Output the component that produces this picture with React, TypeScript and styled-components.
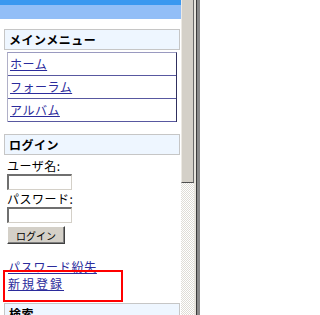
import React from 'react';
import styled, { createGlobalStyle } from 'styled-components';

const GlobalStyle = createGlobalStyle`
  html, body {
    margin: 0;
    padding: 0;
    background: #ffffff;
    overflow: clip;
  }
  body {
    font-family: 'Noto Sans CJK JP', 'DejaVu Sans', sans-serif;
    font-size: 12px;
    color: #000000;
  }
`;

const Page = styled.div`
  display: flex;
  width: 200px;
  height: 315px;
  overflow: clip;
`;

const Content = styled.div`
  position: relative;
  width: 181px;
  height: 315px;
  flex: none;
  display: flex;
  flex-direction: column;
  overflow: clip;
`;

const TopBar = styled.div`
  height: 5px;
  flex: none;
  background: #3a98f0;
`;

const SubBar = styled.div`
  height: 14px;
  flex: none;
  background: #92bef7;
`;

const Sidebar = styled.div`
  display: flex;
  flex-direction: column;
  flex: none;
  padding: 10px 1px 0 4px;
`;

const BlockTitle = styled.div<{ $gap?: number }>`
  height: 19px;
  line-height: 19px;
  flex: none;
  margin-top: ${(p) => p.$gap ?? 0}px;
  padding-left: 4px;
  border: 1px solid #c6c6c6;
  background: #eef6ff;
  font-weight: bold;
  letter-spacing: 0.5px;
`;

const Menu = styled.ul`
  list-style: none;
  margin: 2px 3px 0 3px;
  padding: 0;
  border-top: 1px solid #9a9ac0;
  border-left: 1px solid #b0b0c8;
  border-right: 1px solid #30305e;
`;

const MenuItem = styled.li`
  height: 22px;
  line-height: 22px;
  padding-left: 2px;
  border-bottom: 1px solid #5858a0;
`;

const Link = styled.a<{ $spacing?: number }>`
  color: #2b2b9c;
  text-decoration: underline;
  letter-spacing: ${(p) => p.$spacing ?? 0.5}px;
  cursor: pointer;
`;

const LoginForm = styled.div`
  display: flex;
  flex-direction: column;
  align-items: flex-start;
  padding: 2px 0 0 3px;
`;

const Label = styled.div`
  line-height: 17px;
  letter-spacing: 0.5px;
`;

const TextBox = styled.input`
  box-sizing: border-box;
  width: 65px;
  height: 16px;
  margin: 0;
  padding: 0 2px;
  border-style: solid;
  border-width: 2px 1px 1px 2px;
  border-color: #6f6f6f #d4d0c8 #d4d0c8 #6f6f6f;
  background: #ffffff;
  font-size: 11px;
`;

const Button = styled.button`
  box-sizing: border-box;
  width: 58px;
  height: 18px;
  margin: 3px 0 0 0;
  padding: 0;
  border-style: solid;
  border-width: 1px;
  border-color: #ffffff #404040 #404040 #ffffff;
  box-shadow: inset -1px -1px 0 #808080;
  background: #d4d0c8;
  font-family: 'Noto Sans CJK JP', sans-serif;
  font-size: 10px;
  line-height: 15px;
  color: #000000;
`;

const Links = styled.div`
  display: flex;
  flex-direction: column;
  margin-top: 14px;
  padding-left: 4px;
  line-height: 17px;
`;

const Highlight = styled.div`
  position: absolute;
  left: 3px;
  top: 270px;
  width: 116px;
  height: 28px;
  border: 2px solid #ff0000;
  pointer-events: none;
`;

const Scrollbar = styled.div`
  display: flex;
  width: 19px;
  flex: none;
`;

const ScrollColumn = styled.div`
  display: flex;
  flex-direction: column;
  width: 13px;
`;

const Thumb = styled.div`
  height: 182px;
  background: #d4d0c8;
  border-left: 1px solid #ece9e3;
  border-right: 1px solid #6a6a6a;
  border-bottom: 1px solid #505050;
`;

const Track = styled.div`
  flex: 1;
  background-color: #ece9e3;
  background-image: repeating-conic-gradient(#ffffff 0 25%, #e0ddd6 0 50%);
  background-size: 2px 2px;
`;

const Frame = styled.div`
  flex: 1;
  background: linear-gradient(
    to right,
    #e6e3dc 0 2px,
    #3a3a3a 2px 3px,
    #8a8a8a 3px 100%
  );
`;

const App: React.FC = () => {
  return (
    <>
      <GlobalStyle />
      <Page>
        <Content>
          <TopBar />
          <SubBar />
          <Sidebar>
            <BlockTitle>メインメニュー</BlockTitle>
            <Menu>
              <MenuItem>
                <Link>ホーム</Link>
              </MenuItem>
              <MenuItem>
                <Link>フォーラム</Link>
              </MenuItem>
              <MenuItem>
                <Link>アルバム</Link>
              </MenuItem>
            </Menu>

            <BlockTitle $gap={12}>ログイン</BlockTitle>
            <LoginForm>
              <Label>ユーザ名:</Label>
              <TextBox type="text" />
              <Label>パスワード:</Label>
              <TextBox type="password" />
              <Button type="button">ログイン</Button>
            </LoginForm>
            <Links>
              <div>
                <Link $spacing={0.7}>パスワード紛失</Link>
              </div>
              <div>
                <Link $spacing={2}>新規登録</Link>
              </div>
            </Links>

            <BlockTitle $gap={11}>検索</BlockTitle>
          </Sidebar>
          <Highlight />
        </Content>
        <Scrollbar>
          <ScrollColumn>
            <Thumb />
            <Track />
          </ScrollColumn>
          <Frame />
        </Scrollbar>
      </Page>
    </>
  );
};

export default App;
